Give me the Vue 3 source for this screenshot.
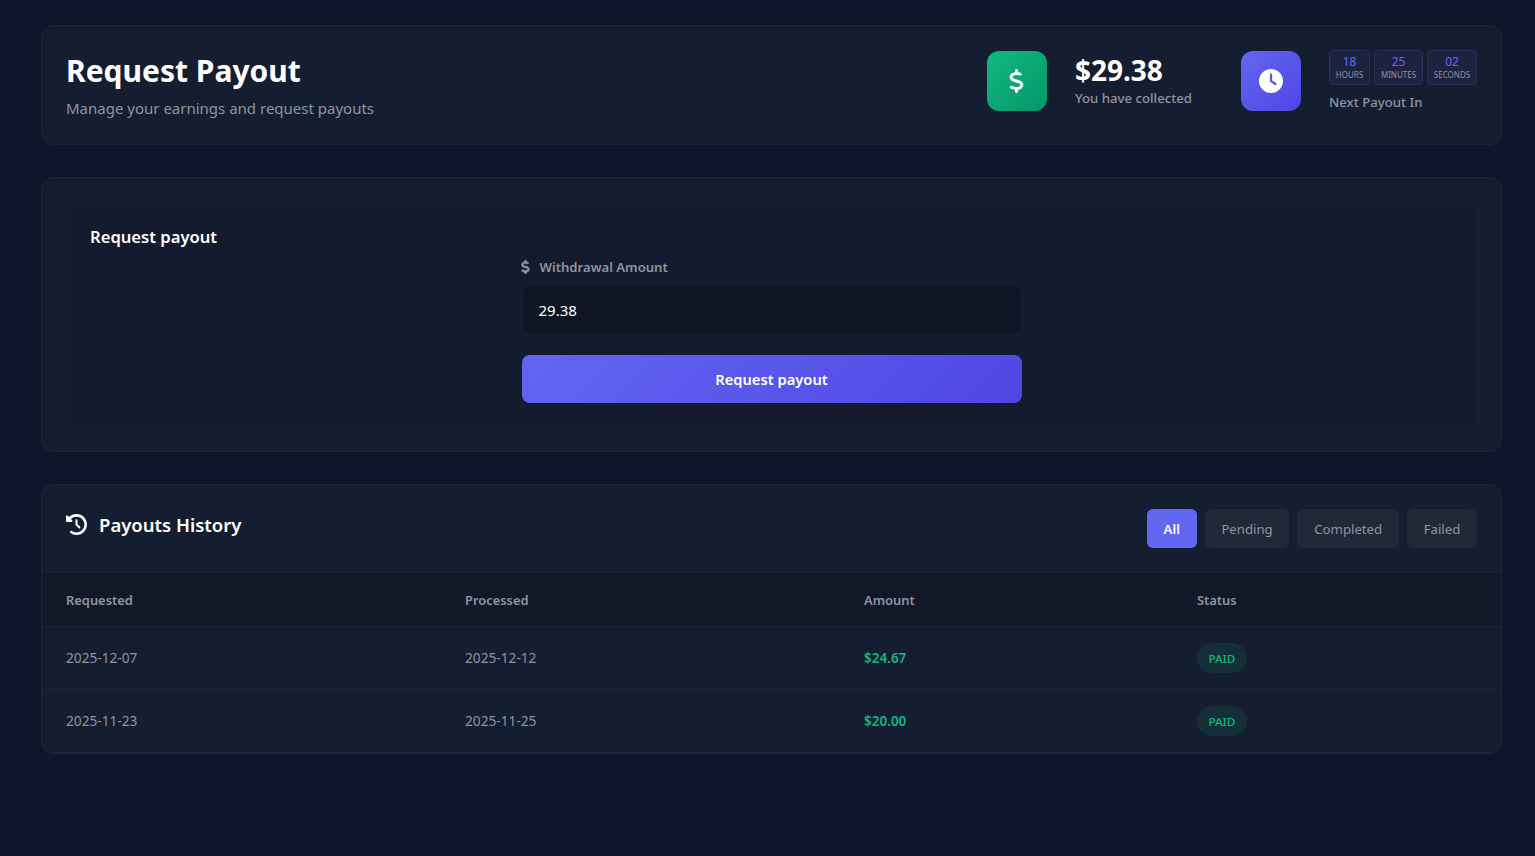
<script setup>
import { ref } from 'vue'

const amount = ref('29.38')
const activeFilter = ref('All')
const filters = ['All', 'Pending', 'Completed', 'Failed']
const timer = [
  { value: '18', label: 'HOURS' },
  { value: '25', label: 'MINUTES' },
  { value: '02', label: 'SECONDS' },
]
const payouts = [
  { requested: '2025-12-07', processed: '2025-12-12', amount: '$24.67', status: 'PAID' },
  { requested: '2025-11-23', processed: '2025-11-25', amount: '$20.00', status: 'PAID' },
]
const dollarPath = 'M160 0c17.7 0 32 14.3 32 32V67.7c1.6 .2 3.1 .4 4.7 .7c.4 .1 .7 .1 1.1 .2l48 8.8c17.4 3.2 28.9 19.9 25.7 37.2s-19.9 28.9-37.2 25.7l-47.5-8.7c-31.3-4.6-58.9-1.5-78.3 6.2s-27.2 18.3-29 28.1c-2 10.7-.5 16.7 1.2 20.4c1.8 3.9 5.5 8.3 12.8 13.2c16.3 10.7 41.3 17.7 73.7 26.3l2.9 .8c28.6 7.6 63.6 16.8 89.6 33.8c14.2 9.3 27.6 21.9 35.9 39.5c8.5 17.9 10.3 37.9 6.4 59.2c-6.9 38-33.1 63.4-65.6 76.7c-13.7 5.6-28.6 9.2-44.4 11V480c0 17.7-14.3 32-32 32s-32-14.3-32-32V445.1c-.4-.1-.9-.1-1.3-.2l-.2 0 0 0c-24.4-3.8-64.5-14.3-91.5-26.3c-16.1-7.2-23.4-26.1-16.2-42.2s26.1-23.4 42.2-16.2c20.9 9.3 55.3 18.5 75.2 21.6c31.9 4.7 58.2 2 76-5.3c16.9-6.9 24.6-16.9 26.8-28.9c1.9-10.6 .4-16.7-1.3-20.4c-1.9-4-5.6-8.4-13-13.3c-16.4-10.7-41.5-17.7-74-26.3l-2.8-.7 0 0C119.4 279.3 84.4 270 58.4 253c-14.2-9.3-27.5-22-35.8-39.6c-8.4-17.9-10.1-37.9-6.1-59.2C23.7 116 52.3 91.2 84.8 78.3c13.3-5.3 27.9-8.9 43.2-11V32c0-17.7 14.3-32 32-32z'
</script>

<template>
  <div class="page">
    <header class="card header">
      <div class="header__title">
        <h1>Request Payout</h1>
        <p>Manage your earnings and request payouts</p>
      </div>
      <div class="stat stat--money">
        <div class="stat__icon stat__icon--green">
          <svg class="icon-dollar" viewBox="0 0 320 512"><path fill="currentColor" :d="dollarPath" /></svg>
        </div>
        <div class="stat__text">
          <div class="stat__value">$29.38</div>
          <div class="stat__label">You have collected</div>
        </div>
      </div>
      <div class="stat">
        <div class="stat__icon stat__icon--indigo">
          <svg class="icon-clock" viewBox="0 0 512 512"><path fill="currentColor" d="M256 0a256 256 0 1 1 0 512A256 256 0 1 1 256 0zM232 120V256c0 8 4 15.5 10.7 20l96 64c11 7.4 25.9 4.4 33.3-6.7s4.4-25.9-6.7-33.3L280 243.2V120c0-13.3-10.7-24-24-24s-24 10.7-24 24z" /></svg>
        </div>
        <div>
          <div class="timer">
            <div v-for="t in timer" :key="t.label" class="timer__box">
              <span class="timer__value">{{ t.value }}</span>
              <span class="timer__label">{{ t.label }}</span>
            </div>
          </div>
          <div class="stat__label stat__label--next">Next Payout In</div>
        </div>
      </div>
    </header>

    <section class="card request">
      <div class="request__inner">
        <h2>Request payout</h2>
        <form class="form" @submit.prevent>
          <label class="form__label">
            <svg class="icon-dollar-sm" viewBox="0 0 320 512"><path fill="currentColor" stroke="currentColor" stroke-width="24" :d="dollarPath" /></svg>
            Withdrawal Amount
          </label>
          <input v-model="amount" class="form__input" type="text" />
          <button class="form__btn" type="submit">Request payout</button>
        </form>
      </div>
    </section>

    <section class="card history">
      <div class="history__head">
        <h2>
          <svg class="icon-history" viewBox="0 0 512 512"><path fill="currentColor" d="M75 75L41 41C25.9 25.9 0 36.6 0 57.9V168c0 13.3 10.7 24 24 24H134.1c21.4 0 32.1-25.9 17-41l-30.8-30.8C155 85.5 203 64 256 64c106 0 192 86 192 192s-86 192-192 192c-40.8 0-78.6-12.7-109.7-34.4c-14.5-10.1-34.4-6.6-44.6 7.9s-6.6 34.4 7.9 44.6C151.2 495 201.7 512 256 512c141.4 0 256-114.6 256-256S397.4 0 256 0C185.3 0 121.3 28.7 75 75zm181 53c-13.3 0-24 10.7-24 24V256c0 6.4 2.5 12.5 7 17l72 72c9.4 9.4 24.6 9.4 33.9 0s9.4-24.6 0-33.9l-65-65V152c0-13.3-10.7-24-24-24z" /></svg>
          Payouts History
        </h2>
        <div class="filters">
          <button
            v-for="f in filters"
            :key="f"
            class="filters__btn"
            :class="{ 'filters__btn--active': f === activeFilter }"
            @click="activeFilter = f"
          >{{ f }}</button>
        </div>
      </div>
      <table class="table">
        <thead>
          <tr>
            <th class="col-1">Requested</th>
            <th class="col-2">Processed</th>
            <th class="col-3">Amount</th>
            <th>Status</th>
          </tr>
        </thead>
        <tbody>
          <tr v-for="p in payouts" :key="p.requested">
            <td class="table__date">{{ p.requested }}</td>
            <td class="table__date">{{ p.processed }}</td>
            <td class="table__amount">{{ p.amount }}</td>
            <td><span class="badge">{{ p.status }}</span></td>
          </tr>
        </tbody>
      </table>
    </section>
  </div>
</template>

<style>
html, body {
  margin: 0;
  background: #0d162a;
}
</style>

<style scoped>
.page {
  box-sizing: border-box;
  width: 1461px;
  margin-left: 41px;
  padding-top: 25px;
  min-height: 856px;
  display: flex;
  flex-direction: column;
  gap: 32px;
  font-family: "Noto Sans", "Open Sans", sans-serif;
  color: #fff;
}

.card {
  box-sizing: border-box;
  background: #151e31;
  border: 1px solid #1d2639;
  border-radius: 12px;
}

/* header */
.header {
  height: 120px;
  padding: 0 24px;
  display: flex;
  align-items: center;
}

.header__title {
  flex: 1;
}

.header__title h1 {
  margin: 1px 0 0;
  font-size: 30px;
  line-height: 38px;
  font-weight: 700;
}

.header__title p {
  margin: 7px 0 0;
  font-size: 15px;
  line-height: 22px;
  color: #8e94a0;
}

.stat {
  display: flex;
  align-items: center;
  gap: 28px;
  padding-bottom: 8px;
}

.stat--money {
  margin-right: 49px;
}

.stat__text {
  padding-bottom: 2px;
}

.stat__icon {
  width: 60px;
  height: 60px;
  border-radius: 12px;
  display: flex;
  align-items: center;
  justify-content: center;
}

.stat__icon--green {
  background: linear-gradient(135deg, #10b981, #059669);
}

.stat__icon--indigo {
  background: linear-gradient(135deg, #6366f1, #4f46e5);
}

.icon-dollar {
  width: 15px;
  height: 24px;
}

.icon-clock {
  width: 24px;
  height: 24px;
}

.stat__value {
  font-size: 28px;
  line-height: 36px;
  font-weight: 700;
}

.stat__label {
  font-size: 13.2px;
  line-height: 20px;
  font-weight: 500;
  color: #8e94a0;
}

.stat__label--next {
  margin-top: 7px;
}

.timer {
  display: grid;
  grid-template-columns: 41px 49px 50px;
  gap: 4px;
}

.timer__box {
  box-sizing: border-box;
  height: 35px;
  display: flex;
  flex-direction: column;
  align-items: center;
  justify-content: center;
  background: #1d233f;
  border: 1px solid #292f59;
  border-radius: 4px;
}

.timer__value {
  font-size: 12px;
  line-height: 14px;
  color: #6366f1;
}

.timer__label {
  font-size: 8px;
  line-height: 11px;
  color: #8e94a0;
}

/* request form */
.request {
  height: 275px;
  padding: 24px;
}

.request__inner {
  box-sizing: border-box;
  height: 226px;
  padding: 24px;
  background: #141b2e;
  border-radius: 8px;
}

.request__inner h2 {
  margin: 0;
  font-size: 16.6px;
  line-height: 22px;
  font-weight: 600;
}

.form {
  width: 500px;
  margin: 8px auto 0;
}

.form__label {
  display: flex;
  align-items: center;
  gap: 10px;
  font-size: 13.1px;
  line-height: 22px;
  font-weight: 600;
  color: #8e94a0;
}

.icon-dollar-sm {
  width: 9px;
  height: 14px;
  margin-left: -1px;
}

.form__input {
  box-sizing: border-box;
  display: block;
  width: 100%;
  height: 50px;
  margin-top: 7px;
  padding: 0 16px;
  background: #0f1524;
  border: 1px solid #161d2f;
  border-radius: 8px;
  outline: none;
  color: #fff;
  font: inherit;
  font-size: 15px;
}

.form__btn {
  display: block;
  width: 100%;
  height: 48px;
  margin-top: 20px;
  border: 0;
  border-radius: 8px;
  background: linear-gradient(135deg, #6366f1, #4f46e5);
  color: #fff;
  font: inherit;
  font-size: 14.7px;
  font-weight: 600;
}

/* history */
.history {
  overflow: hidden;
}

.history__head {
  box-sizing: border-box;
  height: 88px;
  padding: 0 24px;
  display: flex;
  align-items: center;
  justify-content: space-between;
  border-bottom: 1px solid #1d2639;
}

.history__head h2 {
  margin: -9px 0 0;
  display: flex;
  align-items: center;
  gap: 12px;
  font-size: 18.5px;
  font-weight: 600;
}

.icon-history {
  width: 21px;
  height: 21px;
}

.filters {
  display: flex;
  gap: 8px;
}

.filters__btn {
  height: 39px;
  padding: 0 16.75px;
  border: 0;
  border-radius: 6px;
  background: #212939;
  color: #8e94a0;
  font: inherit;
  font-size: 13.2px;
}

.filters__btn--active {
  background: #6366f1;
  color: #fff;
  font-weight: 600;
}

.table {
  width: 100%;
  border-collapse: collapse;
  font-size: 13.7px;
}

.table th {
  height: 53px;
  padding: 0 24px;
  text-align: left;
  background: #111827;
  color: #8e94a0;
  font-size: 12.9px;
  font-weight: 600;
  border-bottom: 1px solid #1d2639;
}

.col-1, .col-2 {
  width: 351px;
}

.col-3 {
  width: 285px;
}

.table td {
  height: 63px;
  padding: 0 24px;
  box-sizing: border-box;
  color: #8e94a0;
  border-bottom: 1px solid #1d2639;
}

.table .table__date {
  padding-bottom: 2px;
}

.table__amount {
  font-size: 13.5px;
  font-weight: 600;
  color: #10b981 !important;
}

.badge {
  display: inline-block;
  vertical-align: middle;
  padding: 0 11.5px;
  height: 30px;
  line-height: 31px;
  border-radius: 15px;
  background: #152f39;
  color: #10b981;
  font-size: 11.6px;
  font-weight: 500;
}
</style>
